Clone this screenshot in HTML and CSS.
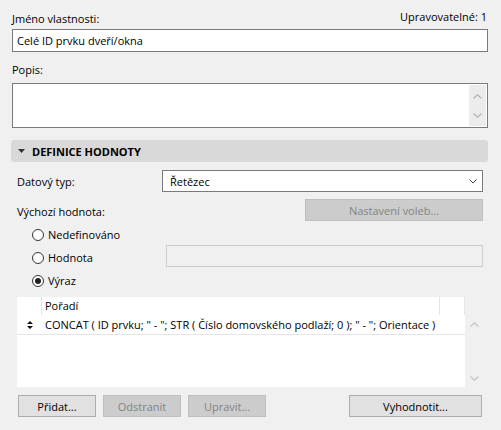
FILE: index.html
```html
<!DOCTYPE html>
<html lang="cs">
<head>
  <meta charset="UTF-8">
  <title>Vlastnost</title>
  <link rel="stylesheet" href="styles.css">
</head>
<body>
<div class="dialog">
  <div class="head-row">
    <span class="lbl">Jméno vlastnosti:</span>
    <span class="editable">Upravovatelné: 1</span>
  </div>
  <div class="field name-field">Celé ID prvku dveří/okna</div>

  <div class="lbl popis-lbl">Popis:</div>
  <div class="field memo">
    <div class="memo-text"></div>
    <div class="vscroll">
      <svg width="9" height="5" viewBox="0 0 9 5"><path d="M0.5 4.5 L4.5 0.8 L8.5 4.5" fill="none" stroke="#b4b4b4" stroke-width="1.3"/></svg>
      <svg width="9" height="5" viewBox="0 0 9 5"><path d="M0.5 0.5 L4.5 4.2 L8.5 0.5" fill="none" stroke="#b4b4b4" stroke-width="1.3"/></svg>
    </div>
  </div>

  <!-- Definice hodnoty -->
  <div class="section-bar">
    <svg class="caret" width="7" height="4" viewBox="0 0 7 4"><path d="M0 0 H7 L3.5 4 Z" fill="#333"/></svg>
    <span>DEFINICE HODNOTY</span>
  </div>

  <div class="section-body">
    <div class="form-row type-row">
      <span class="lbl">Datový typ:</span>
      <div class="select">
        <span>Řetězec</span>
        <svg width="8" height="5" viewBox="0 0 8 5"><path d="M0.5 0.5 L4 4 L7.5 0.5" fill="none" stroke="#444" stroke-width="1"/></svg>
      </div>
    </div>

    <div class="form-row default-row">
      <span class="lbl">Výchozí hodnota:</span>
      <button class="btn options-btn" disabled>Nastavení voleb...</button>
    </div>

    <div class="radios">
      <div class="radio-row">
        <span class="radio"></span><span>Nedefinováno</span>
      </div>
      <div class="radio-row value-row">
        <div class="radio-label"><span class="radio"></span><span>Hodnota</span></div>
        <div class="field off-field"></div>
      </div>
      <div class="radio-row">
        <span class="radio checked"></span><span>Výraz</span>
      </div>
    </div>

    <div class="expr-list">
      <div class="table">
        <div class="thead">
          <div class="cell handle"></div>
          <div class="cell order">Pořadí</div>
          <div class="cell tail"></div>
        </div>
        <div class="trow">
          <div class="cell handle">
            <svg width="6" height="8" viewBox="0 0 6 8"><path d="M0 3 L3 0 L6 3 Z M0 5 L3 8 L6 5 Z" fill="#111"/></svg>
          </div>
          <div class="cell expr">CONCAT ( ID prvku; " - "; STR ( Číslo domovského podlaží; 0 ); " - "; Orientace )</div>
        </div>
      </div>
      <div class="vscroll list-scroll">
        <svg width="9" height="5" viewBox="0 0 9 5"><path d="M0.5 4.5 L4.5 0.8 L8.5 4.5" fill="none" stroke="#c4c4c4" stroke-width="1.3"/></svg>
        <svg width="9" height="5" viewBox="0 0 9 5"><path d="M0.5 0.5 L4.5 4.2 L8.5 0.5" fill="none" stroke="#c4c4c4" stroke-width="1.3"/></svg>
      </div>
    </div>

    <div class="buttons">
      <button class="btn">Přidat...</button>
      <button class="btn" disabled>Odstranit</button>
      <button class="btn" disabled>Upravit...</button>
      <span class="spacer"></span>
      <button class="btn eval-btn">Vyhodnotit...</button>
    </div>
  </div>
</div>
</body>
</html>
```

FILE: styles.css
```css
body {
  margin: 0;
  background-color: #f0f0f0;
  color: #000;
  font-family: "Open Sans", "Noto Sans", sans-serif;
  font-size: 11px;
}

.dialog {
  width: 476px;
  padding: 10px 0 0 12px;
}

.lbl {
  line-height: 17px;
}

/* Top fields */
.head-row {
  display: flex;
  justify-content: space-between;
  align-items: flex-start;
  height: 17px;
  line-height: 17px;
}

.editable {
  margin-top: -2px;
  padding-right: 1px;
}

.field {
  box-sizing: border-box;
  background: #fff;
  border: 1px solid #7a7a7a;
}

.name-field {
  height: 23px;
  margin-top: 2px;
  padding: 0 4px;
  line-height: 21px;
}

.popis-lbl {
  margin-top: 9px;
  height: 17px;
}

.memo {
  display: flex;
  height: 45px;
  margin-top: 5px;
  padding: 1px;
}

.memo-text {
  flex: 1;
}

.vscroll {
  display: flex;
  flex-direction: column;
  align-items: center;
  justify-content: space-between;
  width: 17px;
  background: #ececec;
  padding: 9px 0 8px;
  box-sizing: border-box;
}

/* Section header */
.section-bar {
  display: flex;
  align-items: center;
  gap: 7px;
  height: 22px;
  margin: 12px 0 0 -1px;
  padding-left: 7px;
  background: #d9d9d9;
  border-radius: 3px;
  font-weight: bold;
}

.section-body {
  padding: 0 5px;
}

.form-row {
  display: grid;
  grid-template-columns: 145px 1fr;
  align-items: center;
}

.type-row {
  margin-top: 8px;
}

.select {
  display: flex;
  align-items: center;
  justify-content: space-between;
  box-sizing: border-box;
  height: 22px;
  padding: 0 5px 0 7px;
  background: #fff;
  border: 1px solid #7a7a7a;
}

.default-row {
  margin-top: 7px;
  grid-template-columns: 1fr 178px;
}

.default-row .lbl {
  padding-top: 3px;
}

/* Buttons */
.btn {
  box-sizing: border-box;
  height: 22px;
  width: 78px;
  padding: 0;
  font: inherit;
  color: #000;
  background: #e1e1e1;
  border: 1px solid #adadad;
}

.btn:disabled {
  color: #838383;
  background: #cccccc;
  border-color: #bfbfbf;
}

.options-btn {
  width: 178px;
}

/* Radio group */
.radios {
  margin-top: 2px;
  padding-left: 15px;
}

.radio-row {
  display: flex;
  align-items: center;
  gap: 4px;
  height: 23px;
}

.value-row {
  display: grid;
  grid-template-columns: 130px 1fr;
}

.radio-label {
  display: flex;
  align-items: center;
  gap: 4px;
}

.radio {
  box-sizing: border-box;
  width: 12px;
  height: 12px;
  border: 1px solid #333;
  border-radius: 50%;
  background: #fff;
  position: relative;
}

.radio.checked::after {
  content: "";
  position: absolute;
  left: 2px;
  top: 2px;
  width: 6px;
  height: 6px;
  border-radius: 50%;
  background: #222;
}

.off-field {
  height: 22px;
  margin-top: -3px;
  background: #f0f0f0;
  border-color: #cccccc;
}

/* Expression list */
.expr-list {
  display: flex;
  height: 90px;
  margin-top: 5px;
}

.table {
  flex: 1;
  background: #fff;
}

.thead,
.trow {
  display: flex;
}

.thead {
  height: 18px;
  line-height: 18px;
}

.thead .cell {
  border-right: 1px solid #e5e5e5;
}

.trow {
  height: 19px;
  line-height: 19px;
  border-bottom: 1px solid #e5e5e5;
}

.cell.handle {
  box-sizing: border-box;
  width: 25px;
  display: flex;
  align-items: center;
  justify-content: center;
}

.cell.order {
  flex: 1;
  padding-left: 3px;
}

.cell.tail {
  width: 24px;
}

.cell.expr {
  padding-left: 3px;
  white-space: nowrap;
}

.list-scroll {
  width: 18px;
  background: #f0f0f0;
  padding: 25px 0 6px;
}

.buttons {
  display: flex;
  gap: 7px;
  margin-top: 8px;
  padding-left: 1px;
}

.spacer {
  flex: 1;
}

.eval-btn {
  width: 133px;
  margin-right: 1px;
}
```
